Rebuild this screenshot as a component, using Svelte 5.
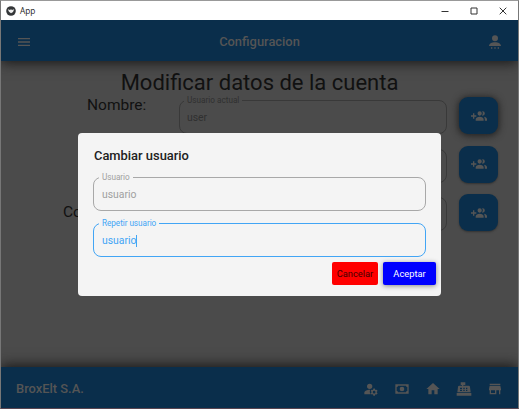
<script>
  const rows = [
    { label: 'Nombre:', hint: 'Usuario actual', value: 'user', raised: true },
    { label: '', hint: '', value: '', raised: false },
    { label: 'Co', hint: '', value: '', raised: false }
  ];
  const footerIcons = [
    'M10 12a4 4 0 1 0 0-8 4 4 0 0 0 0 8ZM10.700 13C7 12.800 2 14.500 2 17.500V20h9.500a7 7 0 0 1-.8-7ZM20.700 16l1.200-.9-1.200-2.100-1.400.6-1.200-.7-.2-1.500h-2.400l-.2 1.500-1.200.7-1.400-.6-1.200 2.100 1.200.9v1.400l-1.200.9 1.200 2.100 1.400-.6 1.200.7.2 1.500h2.400l.2-1.500 1.200-.7 1.400.6 1.200-2.100-1.200-.9V16Zm-4 2.800a2 2 0 1 1 0-4 2 2 0 0 1 0 4Z',
    'M2 5h20v14H2V5Zm4 2a2 2 0 0 1-2 2v6a2 2 0 0 1 2 2h12a2 2 0 0 1 2-2V9a2 2 0 0 1-2-2H6Zm6 1.500a3.500 3.500 0 1 1 0 7 3.500 3.500 0 0 1 0-7Z',
    'M10 20v-6h4v6h5v-8h3L12 3 2 12h3v8h5Z',
    'M7 2h7v4h-3v1h8a2 2 0 0 1 2 2l1 8H2l1-8a2 2 0 0 1 2-2h4V6H7V2Zm-1 8v2h3v-2H6Zm0 3v2h3v-2H6Zm5-3v2h2v-2h-2Zm4 0v2h2v-2h-2Zm-4 3v2h2v-2h-2Zm4 0v2h2v-2h-2ZM1 18h22v4H1v-4Z',
    'M4 4h16v2H4V4Zm0 3h16l1 5v2h-1v6h-2v-6h-4v6H4v-6H3v-2l1-5Zm2 7v4h6v-4H6Z'
  ];
</script>

<div class="window">
  <div class="titlebar">
    <svg class="logo" viewBox="0 0 10 10"><circle cx="5" cy="5" r="4.800" fill="#333638" /><path d="M1.800 3.200 4 3.900 5 3.300l1 .6 2.200-.7L7 6 5 7.200 3 5.700Z" fill="#eee" /></svg>
    <span class="app-name">App</span>
    <div class="controls">
      <svg viewBox="0 0 8 8"><path d="M.5 4.500h7" /></svg>
      <svg viewBox="0 0 8 8"><path d="M1 1h6v6H1Z" /></svg>
      <svg viewBox="0 0 8 8"><path d="m.7.7 6.600 6.600M7.300.7.7 7.300" /></svg>
    </div>
  </div>

  <header class="bar">
    <svg class="icon menu" viewBox="0 0 24 24"><path d="M3 6h18v2H3V6Zm0 5h18v2H3v-2Zm0 5h18v2H3v-2Z" /></svg>
    <h1>Configuracion</h1>
    <svg class="icon account" viewBox="0 0 24 24"><path d="M12 2a4.500 4.500 0 1 1 0 9 4.500 4.500 0 0 1 0-9Zm0 10.500c5 0 9 2.200 9 5.500H3c0-3.300 4-5.500 9-5.500ZM6 20h2v2H6Zm5 0h2v2h-2Zm5 0h2v2h-2Z" /></svg>
  </header>

  <main>
    <h2>Modificar datos de la cuenta</h2>
    {#each rows as row}
      <div class="row">
        <span class="label" class:low={!row.raised}>{row.label}</span>
        <div class="field">
          {#if row.hint}<span class="hint">{row.hint}</span>{/if}
          <span>{row.value}</span>
        </div>
        <button class="add" class:raised={row.raised} aria-label="Cambiar">
          <svg class="icon" viewBox="0 0 24 24"><path d="M3 8h2v3h3v2H5v3H3v-3H0v-2h3V8Zm10-3a3 3 0 1 1 0 6.500A3.200 3.200 0 0 1 13 5Zm4.500 0a3.200 3.200 0 1 1 0 6.500h-.8a5 5 0 0 0 0-6.500h.8ZM13 13c3 0 6 1.400 6 4v2H7v-2c0-2.600 3-4 6-4Zm6.300.2c2.400.4 4.700 1.700 4.700 3.800v2h-3.300v-2c0-1.600-.6-2.900-1.400-3.800Z" /></svg>
        </button>
      </div>
    {/each}
  </main>

  <footer class="bar">
    <span class="brand">BroxElt S.A.</span>
    <nav>
      {#each footerIcons as d}
        <svg class="icon" viewBox="0 0 24 24"><path {d} fill-rule="evenodd" /></svg>
      {/each}
    </nav>
  </footer>

  <section class="dialog">
    <h3>Cambiar usuario</h3>
    <div class="field">
      <span class="hint">Usuario</span>
      <span>usuario</span>
    </div>
    <div class="field focused">
      <span class="hint">Repetir usuario</span>
      <span>usuario</span><i class="caret"></i>
    </div>
    <div class="actions">
      <button class="cancel">Cancelar</button>
      <button class="accept">Aceptar</button>
    </div>
  </section>
</div>

<style>
  .window {
    position: relative;
    box-sizing: border-box;
    width: 519px;
    height: 409px;
    display: flex;
    flex-direction: column;
    overflow: hidden;
    border: 1px solid #777;
    border-top-color: #999;
    border-bottom-color: #594550;
    background: #4b4b4b;
    font-family: Roboto, sans-serif;
    color: #111;
  }
  h1, h2, h3 { margin: 0; font-weight: 500; }
  button { border: 0; padding: 0; font-family: inherit; }
  .titlebar {
    position: relative;
    z-index: 1;
    flex: 0 0 19px;
    display: flex;
    align-items: center;
    background: #fff;
  }
  .logo { width: 10px; height: 10px; margin-left: 5px; }
  .app-name {
    margin-left: 4px;
    margin-top: -1px;
    font: 8.300px "Open Sans", sans-serif;
    color: #222;
  }
  .controls { display: flex; gap: 21px; margin-left: auto; margin-right: 11px; }
  .controls svg { width: 8px; height: 8px; fill: none; stroke: #333; stroke-width: 1; }
  .bar {
    position: relative;
    box-sizing: border-box;
    flex: 0 0 41px;
    display: flex;
    align-items: center;
    justify-content: space-between;
    padding: 0 15px;
    background: #0a2e4b;
    color: #555;
  }
  header.bar { padding-top: 3px; box-shadow: 0 2px 12px #181818; }
  footer.bar { padding-top: 3px; box-shadow: 0 -2px 12px #181818; }
  .icon { display: block; width: 16px; height: 16px; fill: #555; }
  h1 { font-size: 12.900px; line-height: 16px; }
  .brand { font-size: 12.900px; font-weight: 500; line-height: 16px; }
  nav { display: flex; gap: 15px; }
  main { flex: 1; }
  h2 {
    margin-top: 7px;
    height: 32px;
    line-height: 30px;
    font-size: 22px;
    font-weight: 400;
    text-align: center;
  }
  .row { display: flex; align-items: flex-start; height: 48.500px; }
  .label {
    width: 116px;
    margin-left: 62px;
    box-sizing: border-box;
    padding-left: 24px;
    font-size: 15.500px;
    line-height: 10px;
  }
  .label.low { padding-left: 0; padding-top: 10px; }
  .field {
    position: relative;
    box-sizing: border-box;
    display: flex;
    align-items: center;
    width: 268px;
    height: 34px;
    padding: 1px 0 0 7px;
    border: 1px solid #393939;
    border-radius: 8px;
    color: #303030;
    font-size: 10.400px;
  }
  .hint {
    position: absolute;
    left: 4px;
    top: -6px;
    padding: 0 3px;
    font-size: 8.200px;
    line-height: 11px;
    background: #4b4b4b;
  }
  .add {
    width: 39px;
    height: 37px;
    margin: -3px 0 0 12px;
    display: flex;
    align-items: center;
    justify-content: center;
    border-radius: 9px;
    background: #0a2e4b;
    box-shadow: 0 1px 2px #333;
  }
  .add.raised { box-shadow: 0 1px 7px 1px #222; }
  .dialog {
    position: absolute;
    left: 77px;
    top: 132px;
    box-sizing: border-box;
    width: 363px;
    height: 163px;
    padding: 15px 5px 0 15px;
    border-radius: 4px;
    background: #f4f4f4;
  }
  h3 { margin-left: 1px; font-size: 12.900px; line-height: 16px; height: 16px; color: #212121; }
  .dialog .field { width: 333px; margin-top: 12px; border-color: #a8a8a8; color: #a0a0a0; padding-left: 8px; }
  .dialog .field:first-of-type { margin-top: 13px; }
  .dialog .focused { border-color: #42a5f5; color: #42a5f5; }
  .dialog .hint { left: 5px; background: #f4f4f4; letter-spacing: -0.05px; }
  .caret { width: 1px; height: 12px; background: #42a5f5; }
  .actions { display: flex; justify-content: flex-end; gap: 5px; margin-top: 5px; }
  .actions button { height: 23px; border-radius: 2px; font-size: 9.300px; }
  .actions .cancel { width: 46px; background: #f00; color: #400; }
  .actions .accept { width: 53px; background: #00f; color: #fff; box-shadow: 0 1px 5px #888; }
</style>
